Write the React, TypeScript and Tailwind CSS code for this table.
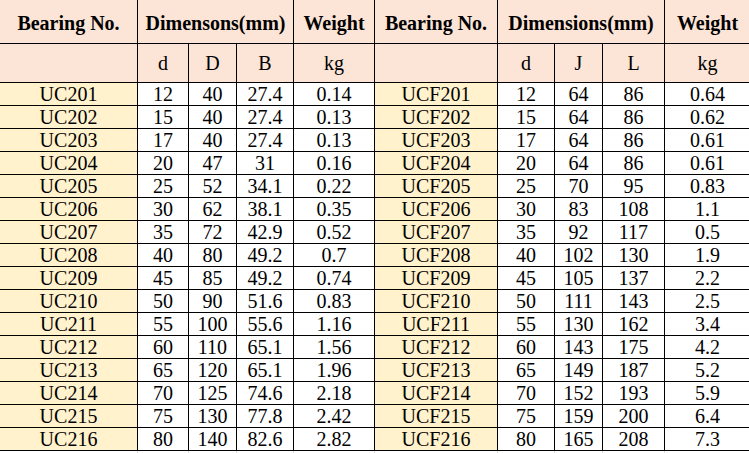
const left = [
  ['UC201', '12', '40', '27.4', '0.14'],
  ['UC202', '15', '40', '27.4', '0.13'],
  ['UC203', '17', '40', '27.4', '0.13'],
  ['UC204', '20', '47', '31', '0.16'],
  ['UC205', '25', '52', '34.1', '0.22'],
  ['UC206', '30', '62', '38.1', '0.35'],
  ['UC207', '35', '72', '42.9', '0.52'],
  ['UC208', '40', '80', '49.2', '0.7'],
  ['UC209', '45', '85', '49.2', '0.74'],
  ['UC210', '50', '90', '51.6', '0.83'],
  ['UC211', '55', '100', '55.6', '1.16'],
  ['UC212', '60', '110', '65.1', '1.56'],
  ['UC213', '65', '120', '65.1', '1.96'],
  ['UC214', '70', '125', '74.6', '2.18'],
  ['UC215', '75', '130', '77.8', '2.42'],
  ['UC216', '80', '140', '82.6', '2.82'],
];

const right = [
  ['UCF201', '12', '64', '86', '0.64'],
  ['UCF202', '15', '64', '86', '0.62'],
  ['UCF203', '17', '64', '86', '0.61'],
  ['UCF204', '20', '64', '86', '0.61'],
  ['UCF205', '25', '70', '95', '0.83'],
  ['UCF206', '30', '83', '108', '1.1'],
  ['UCF207', '35', '92', '117', '0.5'],
  ['UCF208', '40', '102', '130', '1.9'],
  ['UCF209', '45', '105', '137', '2.2'],
  ['UCF210', '50', '111', '143', '2.5'],
  ['UCF211', '55', '130', '162', '3.4'],
  ['UCF212', '60', '143', '175', '4.2'],
  ['UCF213', '65', '149', '187', '5.2'],
  ['UCF214', '70', '152', '193', '5.9'],
  ['UCF215', '75', '159', '200', '6.4'],
  ['UCF216', '80', '165', '208', '7.3'],
];

const cell = 'flex items-center justify-center border-r border-b border-black whitespace-nowrap';
const head = `${cell} bg-[#fce4d6] font-bold`;

export default function App() {
  return (
    <div className="w-[749px] h-[453px] overflow-hidden bg-white text-black text-[20px] leading-none font-['Liberation_Serif','Times_New_Roman',serif]">
      <div className="grid w-[765px] grid-cols-[138px_51px_48px_57px_81px_123px_57px_48px_62px_86px] grid-rows-[44px_39px_repeat(16,23px)_8px]">
        <div className={`${head} pt-[2px]`}>Bearing No.</div>
        <div className={`${head} col-span-3 pt-[2px]`}>Dimensons(mm)</div>
        <div className={`${head} pt-[2px]`}>Weight</div>
        <div className={`${head} pt-[2px]`}>Bearing No.</div>
        <div className={`${head} col-span-3 pt-[2px]`}>Dimensions(mm)</div>
        <div className={`${head} pt-[2px]`}>Weight</div>

        <div className={`${cell} bg-[#fce4d6]`}></div>
        <div className={`${cell} bg-[#fce4d6]`}>d</div>
        <div className={`${cell} bg-[#fce4d6]`}>D</div>
        <div className={`${cell} bg-[#fce4d6]`}>B</div>
        <div className={`${cell} bg-[#fce4d6]`}>kg</div>
        <div className={`${cell} bg-[#fce4d6]`}></div>
        <div className={`${cell} bg-[#fce4d6]`}>d</div>
        <div className={`${cell} bg-[#fce4d6]`}>J</div>
        <div className={`${cell} bg-[#fce4d6]`}>L</div>
        <div className={`${cell} bg-[#fce4d6]`}>kg</div>

        {left.map((row, i) => {
          const r = right[i];
          return [
            <div key={`a${i}`} className={`${cell} bg-[#fff2cc]`}>{row[0]}</div>,
            <div key={`b${i}`} className={cell}>{row[1]}</div>,
            <div key={`c${i}`} className={cell}>{row[2]}</div>,
            <div key={`d${i}`} className={cell}>{row[3]}</div>,
            <div key={`e${i}`} className={cell}>{row[4]}</div>,
            <div key={`f${i}`} className={`${cell} bg-[#fff2cc]`}>{r[0]}</div>,
            <div key={`g${i}`} className={cell}>{r[1]}</div>,
            <div key={`h${i}`} className={cell}>{r[2]}</div>,
            <div key={`i${i}`} className={cell}>{r[3]}</div>,
            <div key={`j${i}`} className={cell}>{r[4]}</div>,
          ];
        })}

        {Array.from({ length: 10 }).map((_, i) => (
          <div key={`g${i}`} className="border-r border-[#dadada]"></div>
        ))}
      </div>
    </div>
  );
}
